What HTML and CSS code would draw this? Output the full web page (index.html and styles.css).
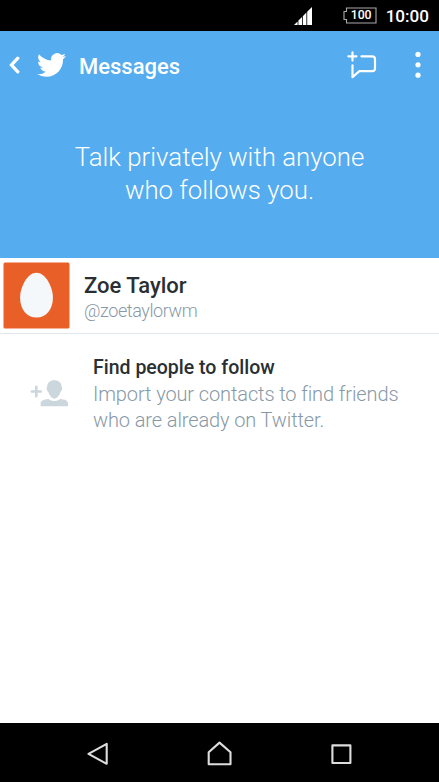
FILE: index.html
```html
<!DOCTYPE html>
<html lang="en">
<head>
    <meta charset="utf-8">
    <title>Messages</title>
    <link rel="stylesheet" href="styles.css">
</head>
<body>
    <div class="status-bar">
        <svg class="signal" width="18" height="18" viewBox="0 0 18 18" fill="#fff">
            <path d="M0 18L3.6 14.4V18zM4.4 13.6L8 10V18H4.4zM8.8 9.2L12.4 5.6V18H8.8zM13.2 4.8L18 0V18H13.2z"/>
        </svg>
        <div class="battery">
            <svg width="34" height="17" viewBox="0 0 34 17" fill="none" stroke="#aaa" stroke-width="1.1">
                <path d="M3.5 1H33V16H3.5V12.5H1V4.5H3.5z"/>
            </svg>
            <span class="level">100</span>
        </div>
        <span class="clock">10:00</span>
    </div>

    <header class="toolbar">
        <svg class="back" width="11" height="18" viewBox="0 0 11 18" fill="none" stroke="#fff" stroke-width="3.3" stroke-linecap="round">
            <path d="M8.8 2.2L2.5 9L8.8 15.8"/>
        </svg>
        <svg class="bird" width="29" height="24" viewBox="0 2.1 24 19.8" fill="#fff">
            <path d="M23.953 4.57a10 10 0 01-2.825.775 4.958 4.958 0 002.163-2.723c-.951.555-2.005.959-3.127 1.184a4.92 4.92 0 00-8.384 4.482C7.69 8.095 4.067 6.13 1.64 3.162a4.822 4.822 0 00-.666 2.475c0 1.71.87 3.213 2.188 4.096a4.904 4.904 0 01-2.228-.616v.06a4.923 4.923 0 003.946 4.827 4.996 4.996 0 01-2.212.085 4.936 4.936 0 004.604 3.417 9.867 9.867 0 01-6.102 2.105c-.39 0-.779-.023-1.17-.067a13.995 13.995 0 007.557 2.209c9.053 0 13.998-7.496 13.998-13.985 0-.21 0-.42-.015-.63A9.935 9.935 0 0024 4.59z"/>
        </svg>
        <h1>Messages</h1>
        <svg class="compose" width="30" height="28" viewBox="0 0 30 28" fill="none" stroke="#fff" stroke-width="2.2" stroke-linecap="round" stroke-linejoin="round">
            <path d="M5.5 1.4V9.6M1.3 5.3H9.5"/>
            <path d="M14.4 5.3H25.3Q28 5.3 28 8V17.6Q28 20.2 25.3 20.2H12.4L5.5 26.2V14.3"/>
        </svg>
        <svg class="more" width="6" height="28" viewBox="0 0 6 28" fill="#fff">
            <circle cx="3" cy="3.4" r="2.6"/>
            <circle cx="3" cy="13.8" r="2.6"/>
            <circle cx="3" cy="24.2" r="2.6"/>
        </svg>
    </header>

    <section class="intro">
        <p>Talk privately with anyone<br>who follows you.</p>
    </section>

    <main>
        <div class="user">
            <svg class="avatar" width="67" height="67" viewBox="0 0 67 67">
                <rect x=".5" y=".5" width="66" height="66" rx="1.5" fill="#e95f28"/>
                <path d="M33.5 10.8C42.3 10.8 49.9 24.6 49.9 35.9C49.9 47.6 42.8 55.6 33.5 55.6S17.1 47.6 17.1 35.9C17.1 24.6 24.7 10.8 33.5 10.8z" fill="#f4f8fb"/>
            </svg>
            <div class="user-text">
                <div class="name">Zoe Taylor</div>
                <div class="handle">@zoetaylorwm</div>
            </div>
        </div>
        <div class="find">
            <svg class="add-person" width="38" height="27" viewBox="0 0 38 27" fill="#ccd6dd">
                <path d="M6.3 6.8V16.2M1.8 11.5H10.8" fill="none" stroke="#ccd6dd" stroke-width="2.6" stroke-linecap="round"/>
                <path d="M24.4 .3C28.8 .3 31.5 2.8 31.5 6.5Q32.6 7 32 9.5Q31.6 11.3 30.6 11.5C29.4 15.8 26.8 18.5 24.4 18.5S19.4 15.8 18.2 11.5Q17.2 11.3 16.8 9.5Q16.2 7 17.3 6.5C17.3 2.8 20 .3 24.4 .3z"/>
                <path d="M10.6 26.2V23.5C10.6 20.4 14 19.3 18.6 18.9C22 21.6 26.8 21.6 30.2 18.9C34.8 19.3 38 20.4 38 23.5V26.2z"/>
            </svg>
            <div>
                <div class="find-title">Find people to follow</div>
                <div class="find-text">Import your contacts to find friends<br>who are already on Twitter.</div>
            </div>
        </div>
    </main>

    <nav class="nav-bar">
        <svg width="22" height="26" viewBox="0 0 22 26">
            <path d="M19.7 2.8V22.8L1.5 12.8z"/>
        </svg>
        <svg width="26" height="26" viewBox="0 0 26 26">
            <path d="M1.7 23.2V11.2L12.5 1.6L23.5 11.2V23.2z"/>
        </svg>
        <svg width="22" height="26" viewBox="0 0 22 26">
            <path d="M2.4 4.4H20.4V22H2.4z"/>
        </svg>
    </nav>
</body>
</html>
```
FILE: styles.css
```css
body {
    margin: 0;
    height: 782px;
    display: flex;
    flex-direction: column;
    overflow: hidden;
    font-family: Roboto, sans-serif;
    background-color: #fff;
}
svg {
    display: block;
    flex: none;
}
.status-bar {
    height: 31px;
    display: flex;
    align-items: center;
    justify-content: flex-end;
    padding-right: 10px;
    box-sizing: border-box;
    background-color: #000;
    color: #fff;
}
.signal {
    margin-right: 31px;
    margin-top: 1px;
}
.battery {
    display: grid;
    margin-right: 9px;
    margin-top: -1px;
}
.battery > * {
    grid-area: 1 / 1;
}
.level {
    padding-left: 3px;
    font-size: 12.3px;
    font-weight: 500;
    line-height: 17px;
    text-align: center;
}
.clock {
    font-size: 17.1px;
    font-weight: 500;
    line-height: 31px;
    padding-top: 1px;
}
.toolbar {
    height: 69px;
    display: flex;
    align-items: center;
    padding: 0 18px 0 9px;
    background-color: #55acee;
    color: #fff;
}
.back {
    margin-top: -1px;
}
.bird {
    margin-left: 17px;
    margin-top: -1px;
}
.toolbar h1 {
    margin: 0 auto 0 13px;
    padding-top: 1px;
    font-size: 22px;
    font-weight: 500;
}
.compose {
    margin-top: -2px;
}
.more {
    margin-left: 38px;
    margin-top: -2px;
}
.intro {
    height: 158px;
    background-color: #55acee;
    color: #fff;
    text-align: center;
}
.intro p {
    margin: 0;
    padding-top: 41px;
    font-size: 25.8px;
    font-weight: 300;
    line-height: 33.4px;
}
main {
    flex: 1;
}
.user {
    height: 75px;
    display: flex;
    align-items: center;
    gap: 14px;
    padding-left: 3px;
    border-bottom: 1px solid #e1e8ed;
}
.user-text {
    padding-top: 5px;
}
.name {
    font-size: 22px;
    font-weight: 500;
    line-height: 26px;
    color: #292f33;
}
.handle {
    font-size: 18px;
    font-weight: 300;
    line-height: 24px;
    letter-spacing: -0.42px;
    color: #8899a6;
}
.find {
    display: flex;
    gap: 25px;
    padding: 21px 0 0 30px;
}
.add-person {
    margin-top: 25px;
}
.find-title {
    font-size: 19.5px;
    font-weight: 500;
    line-height: 26px;
    color: #292f33;
}
.find-text {
    font-size: 20px;
    font-weight: 300;
    line-height: 26px;
    letter-spacing: -0.11px;
    color: #8899a6;
}
.nav-bar {
    height: 59px;
    display: flex;
    align-items: center;
    justify-content: space-between;
    padding: 3px 87px 0;
    box-sizing: border-box;
    background-color: #000;
}
.nav-bar path {
    fill: none;
    stroke: #ddd;
    stroke-width: 2.1;
    stroke-linejoin: round;
}
```
